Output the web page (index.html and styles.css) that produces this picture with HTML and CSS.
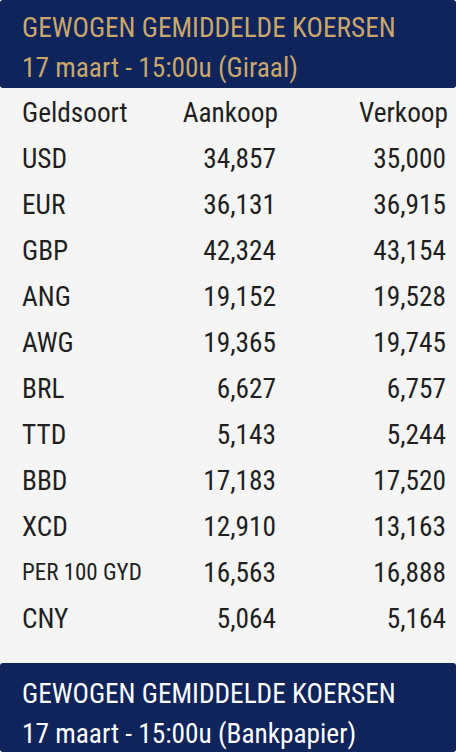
FILE: index.html
```html
<!DOCTYPE html>
<html lang="nl">
<head>
<meta charset="utf-8">
<link rel="stylesheet" href="styles.css">
</head>
<body>
<section class="card">
  <header class="card-head head-gold">
    <div class="head-title">GEWOGEN GEMIDDELDE KOERSEN</div>
    <div class="head-sub">17 maart - 15:00u (Giraal)</div>
  </header>
  <div class="rates">
    <div class="row row-head"><span class="cur">Geldsoort</span><span class="num">Aankoop</span><span class="num">Verkoop</span></div>
    <div class="row"><span class="cur">USD</span><span class="num">34,857</span><span class="num">35,000</span></div>
    <div class="row"><span class="cur">EUR</span><span class="num">36,131</span><span class="num">36,915</span></div>
    <div class="row"><span class="cur">GBP</span><span class="num">42,324</span><span class="num">43,154</span></div>
    <div class="row"><span class="cur">ANG</span><span class="num">19,152</span><span class="num">19,528</span></div>
    <div class="row"><span class="cur">AWG</span><span class="num">19,365</span><span class="num">19,745</span></div>
    <div class="row"><span class="cur">BRL</span><span class="num">6,627</span><span class="num">6,757</span></div>
    <div class="row"><span class="cur">TTD</span><span class="num">5,143</span><span class="num">5,244</span></div>
    <div class="row"><span class="cur">BBD</span><span class="num">17,183</span><span class="num">17,520</span></div>
    <div class="row"><span class="cur">XCD</span><span class="num">12,910</span><span class="num">13,163</span></div>
    <div class="row"><span class="cur cur-small">PER 100 GYD</span><span class="num">16,563</span><span class="num">16,888</span></div>
    <div class="row"><span class="cur">CNY</span><span class="num">5,064</span><span class="num">5,164</span></div>
  </div>
</section>
<section class="card card-second">
  <header class="card-head head-white">
    <div class="head-title">GEWOGEN GEMIDDELDE KOERSEN</div>
    <div class="head-sub">17 maart - 15:00u (Bankpapier)</div>
  </header>
</section>
</body>
</html>
```
FILE: styles.css
```css
html, body {
  margin: 0;
  padding: 0;
  background: #f5f5f5;
}
body {
  font-family: "Roboto Condensed", Roboto, "Liberation Sans", sans-serif;
  font-stretch: 75%;
  color: #1f1f1f;
  height: 752px;
  overflow: hidden;
}
.card-head {
  background: #0e245b;
  border-radius: 3px;
  padding: 8px 22px 0;
  height: 80px;
  font-size: 27.3px;
  line-height: 40px;
  white-space: nowrap;
  overflow: hidden;
}
.head-gold { color: #c9a76b; }
.head-white { color: #ffffff; }
.card-second {
  margin-top: 21px;
}
.card-second .card-head {
  padding-top: 11px;
  height: 78px;
}
.rates {
  padding: 2px 8px 0 22px;
}
.row {
  display: grid;
  grid-template-columns: 1fr 120px 170px;
  height: 46px;
  line-height: 46px;
  font-size: 27.3px;
  white-space: nowrap;
}
.num {
  text-align: right;
  padding-right: 2px;
}
.row-head .num {
  padding-right: 0;
}
.cur-small {
  font-size: 23px;
}
```
